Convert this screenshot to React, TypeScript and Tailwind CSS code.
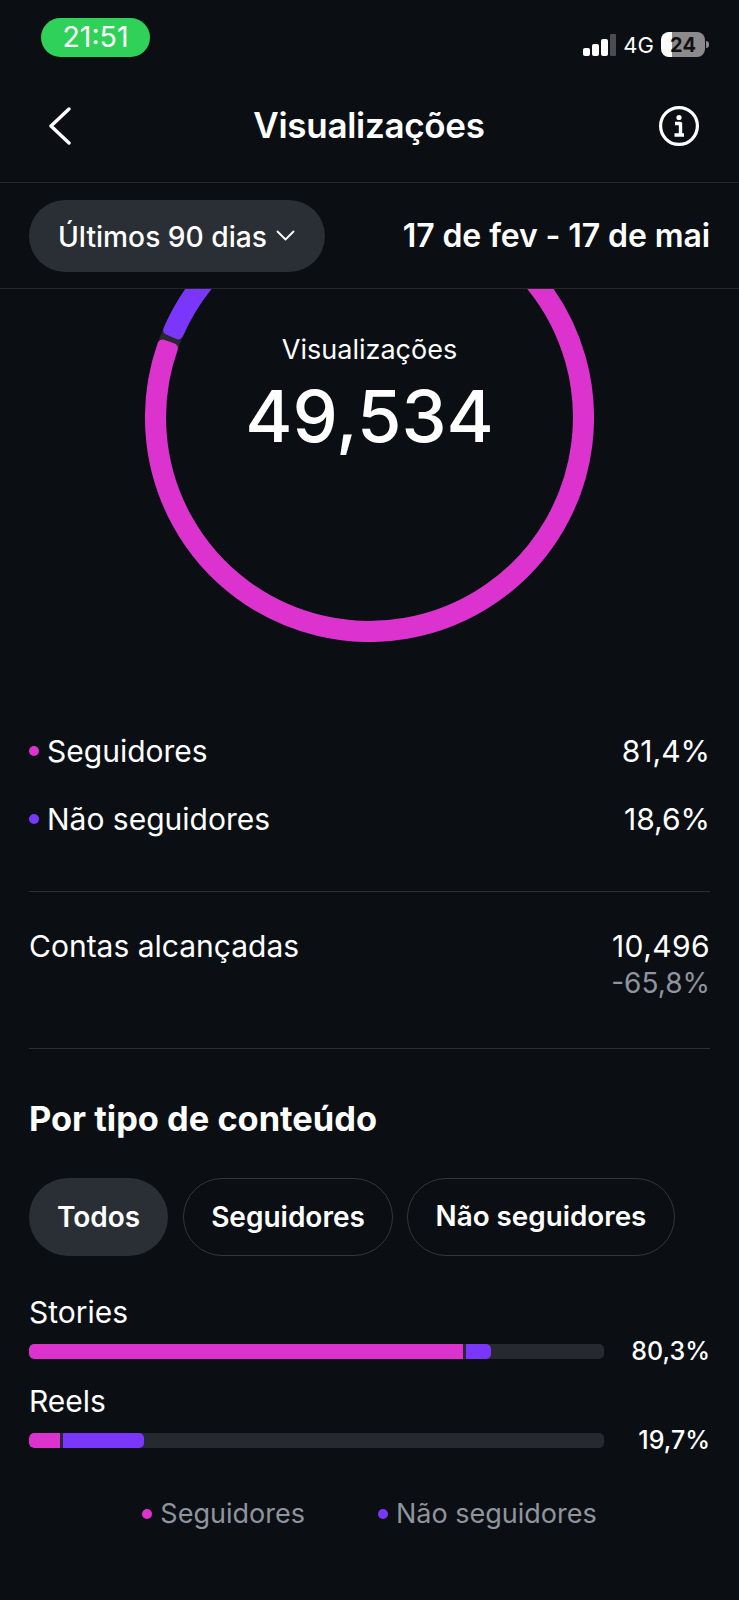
const MAGENTA = '#dc33cf';
const PURPLE = '#7a36fb';

const legendRows = [
  { label: 'Seguidores', value: '81,4%', dot: 'bg-[#dc33cf]' },
  { label: 'Não seguidores', value: '18,6%', dot: 'bg-[#7a36fb]' },
];

const bars = [
  { label: 'Stories', value: '80,3%', first: 'w-[434px]', second: 'w-[25px]' },
  { label: 'Reels', value: '19,7%', first: 'w-[31px]', second: 'w-[81px]' },
];

const StatusBar = () => (
  <div className="h-[78px] pt-[18px] pl-[41px] pr-[30px] flex justify-between items-start">
    <div className="w-[109px] h-[39px] rounded-full bg-[#30d158] flex items-center justify-center text-[28.5px] text-white">
      21:51
    </div>
    <div className="flex items-center gap-[7px] mt-[14px]">
      <svg width="33" height="22" viewBox="0 0 33 22" fill="#fff">
        <rect x="0" y="14" width="7" height="8" rx="2" />
        <rect x="9" y="10" width="7" height="12" rx="2" />
        <rect x="18" y="5" width="7" height="17" rx="2" />
        <rect x="27" y="0" width="6" height="22" rx="1" fill="#4a4c50" />
      </svg>
      <span className="text-[22px] text-white leading-none">4G</span>
      <div className="flex items-center gap-[1px]">
        <div className="w-[44px] h-[25px] rounded-[8px] bg-[linear-gradient(90deg,#ffffff_25%,#8b8b8d_25%)] flex items-center justify-center text-[20px] font-bold text-[#111] leading-none">
          24
        </div>
        <div className="w-[3px] h-[7px] rounded-r-full bg-[#8b8b8d]" />
      </div>
    </div>
  </div>
);

const NavBar = () => (
  <div className="h-[105px] pb-[9px] pl-[49px] pr-[40px] flex items-center justify-between border-b border-[#24272c]">
    <svg width="22" height="38" viewBox="0 0 22 38" fill="none" stroke="#fff" strokeWidth="3.4" strokeLinecap="round" strokeLinejoin="round">
      <path d="M20 2 L2 19 L20 36" />
    </svg>
    <h1 className="ml-[8px] text-[35px] font-semibold text-white tracking-[-0.3px]">Visualizações</h1>
    <svg width="40" height="40" viewBox="0 0 40 40" fill="none">
      <circle cx="20" cy="20" r="18.4" stroke="#fff" strokeWidth="3.2" />
      <circle cx="20" cy="11.5" r="2.6" fill="#fff" />
      <path d="M16 17.5 H21.5 V28 M15.5 29 H25" stroke="#fff" strokeWidth="3.4" strokeLinejoin="round" />
    </svg>
  </div>
);

const FilterBar = () => (
  <div className="h-[106px] pl-[29px] pr-[29px] flex items-center justify-between border-b border-[#24272c]">
    <div className="w-[296px] h-[72px] rounded-full bg-[#2a2e35] flex items-center pl-[29px] gap-[9px]">
      <span className="text-[28.2px] font-medium text-white mt-[3px]">Últimos 90 dias</span>
      <svg width="19" height="11" viewBox="0 0 19 11" fill="none" stroke="#fff" strokeWidth="1.8" strokeLinecap="round" strokeLinejoin="round" className="-mt-[1px]">
        <path d="M1.5 1.5 L9.5 9.5 L17.5 1.5" />
      </svg>
    </div>
    <span className="text-[32px] font-semibold text-white tracking-[-0.1px]">17 de fev - 17 de mai</span>
  </div>
);

// ring segment with small rounded corners, angles in degrees clockwise from the top
const segmentPath = (from: number, to: number) => {
  const inner = 208.5;
  const outer = 219.5;
  const point = (r: number, deg: number) => {
    const a = (deg * Math.PI) / 180;
    return `${224.5 + r * Math.sin(a)} ${224.5 - r * Math.cos(a)}`;
  };
  const large = to - from > 180 ? 1 : 0;
  return `M${point(outer, from)} A${outer} ${outer} 0 ${large} 1 ${point(outer, to)} L${point(inner, to)} A${inner} ${inner} 0 ${large} 0 ${point(inner, from)} Z`;
};

const Ring = () => (
  <div className="relative h-[428px] overflow-hidden flex justify-center">
    <svg width="449" height="449" viewBox="0 0 449 449" className="shrink-0 -mt-[96px]">
      <circle cx="224.5" cy="224.5" r="214" fill="none" stroke="#26292f" strokeWidth="21" />
      <path d={segmentPath(1, 289.4)} fill={MAGENTA} stroke={MAGENTA} strokeWidth="10" strokeLinejoin="round" />
      <path d={segmentPath(293.5, 359)} fill={PURPLE} stroke={PURPLE} strokeWidth="10" strokeLinejoin="round" />
    </svg>
    {/* Centre of the ring */}
    <div className="absolute top-[40px] left-0 right-0 flex flex-col items-center text-white">
      <span className="text-[27px] leading-[42px]">Visualizações</span>
      <span className="text-[72px] leading-[90px] font-medium">49,534</span>
    </div>
  </div>
);

const Divider = () => <div className="h-px bg-[#2b2e33]" />;

export default function App() {
  return (
    <div className="w-[739px] h-[1600px] bg-[#0b0f14] text-white overflow-hidden font-['Inter',sans-serif]">
      <StatusBar />
      <NavBar />
      <FilterBar />
      <Ring />

      <div className="px-[29px]">
        {legendRows.map((row) => (
          <div key={row.label} className="h-[68px] flex items-center justify-between text-[30px]">
            <div className="flex items-center gap-[8px]">
              <span className={`w-[10px] h-[10px] rounded-full ${row.dot}`} />
              <span>{row.label}</span>
            </div>
            <span>{row.value}</span>
          </div>
        ))}

        <div className="mt-[38px]">
          <Divider />
        </div>

        <div className="pt-[36px] pb-[46px] flex justify-between items-start text-[30px] leading-[37px]">
          <span>Contas alcançadas</span>
          <div className="flex flex-col items-end">
            <span className="tracking-[0.4px]">10,496</span>
            <span className="text-[28px] text-[#8f949e]">-65,8%</span>
          </div>
        </div>

        <Divider />

        <h2 className="mt-[48px] text-[34.4px] leading-[44px] font-bold">Por tipo de conteúdo</h2>

        <div className="mt-[37px] flex">
          <div className="w-[139px] h-[78px] rounded-full bg-[#2a2e35] flex items-center justify-center text-[28px] font-semibold">
            Todos
          </div>
          <div className="ml-[15px] w-[210px] h-[78px] rounded-full border border-[#33363b] flex items-center justify-center text-[28px] font-semibold">
            Seguidores
          </div>
          <div className="ml-[14px] w-[268px] h-[78px] rounded-full border border-[#33363b] flex items-center justify-center text-[27.8px] font-semibold">
            Não seguidores
          </div>
        </div>

        <div className="mt-[37px] flex flex-col gap-[23px]">
          {bars.map((bar) => (
            <div key={bar.label}>
              <div className="text-[30px] leading-[38px]">{bar.label}</div>
              <div className="mt-[13px] flex items-center justify-between h-[15px]">
                <div className="w-[575px] h-[15px] rounded-[5px] bg-[#26292f] flex overflow-hidden">
                  <div className={`${bar.first} h-full rounded-l-[5px] bg-[#dc33cf]`} />
                  <div className={`${bar.second} ml-[3px] h-full rounded-r-[5px] bg-[#7a36fb]`} />
                </div>
                <span className="text-[25px] font-medium">{bar.value}</span>
              </div>
            </div>
          ))}
        </div>

        <div className="mt-[46px] flex justify-center gap-[73px] text-[27px] text-[#8f949e]">
          <div className="flex items-center gap-[8px]">
            <span className="w-[10px] h-[10px] rounded-full bg-[#dc33cf]" />
            <span>Seguidores</span>
          </div>
          <div className="flex items-center gap-[8px]">
            <span className="w-[10px] h-[10px] rounded-full bg-[#7a36fb]" />
            <span>Não seguidores</span>
          </div>
        </div>
      </div>
    </div>
  );
}
